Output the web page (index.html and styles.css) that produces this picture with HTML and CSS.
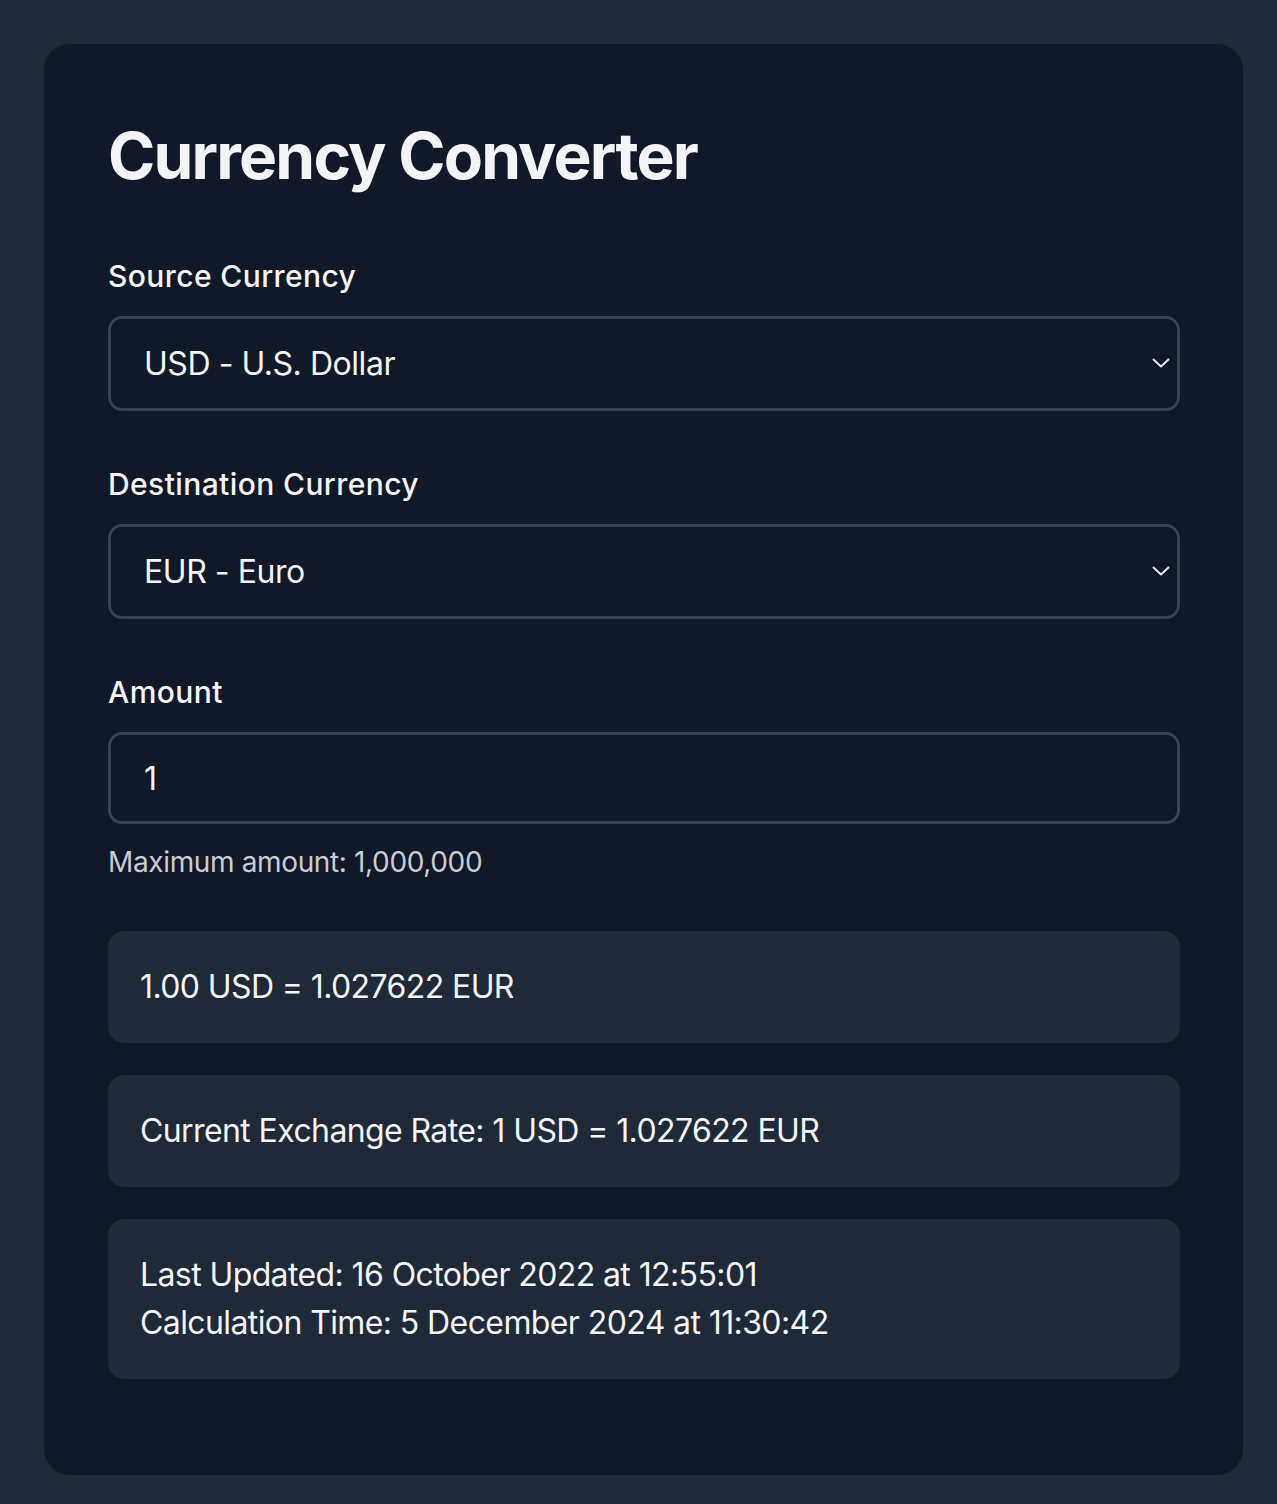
FILE: index.html
```html
<!DOCTYPE html>
<html lang="en">
<head>
<meta charset="utf-8">
<title>Currency Converter</title>
<link rel="stylesheet" href="styles.css">
</head>
<body>
<main class="card">
  <h1 class="title">Currency Converter</h1>

  <div class="field">
    <label class="label" for="src">Source Currency</label>
    <div class="select-wrap">
      <select id="src" class="control select">
        <option>USD - U.S. Dollar</option>
      </select>
      <svg class="chevron" width="18" height="10" viewBox="0 0 18 10" aria-hidden="true"><path d="M1.5 1.5 L9 8.5 L16.5 1.5" fill="none" stroke="#e5e7eb" stroke-width="2" stroke-linecap="round" stroke-linejoin="round"/></svg>
    </div>
  </div>

  <div class="field">
    <label class="label" for="dst">Destination Currency</label>
    <div class="select-wrap">
      <select id="dst" class="control select">
        <option>EUR - Euro</option>
      </select>
      <svg class="chevron" width="18" height="10" viewBox="0 0 18 10" aria-hidden="true"><path d="M1.5 1.5 L9 8.5 L16.5 1.5" fill="none" stroke="#e5e7eb" stroke-width="2" stroke-linecap="round" stroke-linejoin="round"/></svg>
    </div>
  </div>

  <div class="field field-amount">
    <label class="label" for="amt">Amount</label>
    <input id="amt" class="control input" type="text" value="1">
    <p class="hint">Maximum amount: 1,000,000</p>
  </div>

  <div class="results">
    <div class="panel">1.00 USD = 1.027622 EUR</div>
    <div class="panel">Current Exchange Rate: 1 USD = 1.027622 EUR</div>
    <div class="panel">
      <div>Last Updated: 16 October 2022 at 12:55:01</div>
      <div>Calculation Time: 5 December 2024 at 11:30:42</div>
    </div>
  </div>
</main>
</body>
</html>
```

FILE: styles.css
```css
* { box-sizing: border-box; }

html, body {
  margin: 0;
  padding: 0;
  background: #1f2937;
}

body {
  padding: 44px 34px 30px 44px;
  font-family: Inter, "Noto Sans", "Liberation Sans", sans-serif;
  color: #f3f4f6;
}

.card {
  width: 1199px;
  min-height: 1430px;
  background: #111827;
  border-radius: 26px;
  padding: 64px 63px 96px 64px;
  display: flex;
  flex-direction: column;
}

.title {
  margin: 10px 0 0 0;
  font-size: 64px;
  line-height: 76px;
  font-weight: 700;
  letter-spacing: -1.8px;
  color: #f3f4f6;
}

.field {
  display: flex;
  flex-direction: column;
}

.title + .field { margin-top: 60px; }
.field + .field { margin-top: 51px; }

.label {
  font-size: 30px;
  line-height: 45px;
  font-weight: 500;
  letter-spacing: 0.4px;
  color: #f3f4f6;
  margin-bottom: 17px;
}

.select-wrap {
  position: relative;
}

.control {
  width: 100%;
  background: #111827;
  color: #f3f4f6;
  border: 3px solid #374151;
  border-radius: 14px;
  font-family: Inter, "Noto Sans", "Liberation Sans", sans-serif;
  font-size: 32px;
  letter-spacing: -0.45px;
  margin: 0;
  outline: none;
}

.select {
  -webkit-appearance: none;
  appearance: none;
  height: 95px;
  padding: 0 60px 0 33px;
}

.input {
  height: 92px;
  padding: 0 33px;
}

.chevron {
  position: absolute;
  right: 10px;
  top: 42px;
  pointer-events: none;
}

.hint {
  margin: 17px 0 0 0;
  font-size: 28px;
  line-height: 42px;
  letter-spacing: -0.36px;
  color: #c9ccd2;
}

.results {
  margin-top: 48px;
  display: flex;
  flex-direction: column;
  gap: 32px;
}

.panel {
  background: #1f2937;
  border-radius: 16px;
  padding: 32px;
  font-size: 32px;
  line-height: 48px;
  letter-spacing: -0.6px;
  color: #f3f4f6;
}
```
